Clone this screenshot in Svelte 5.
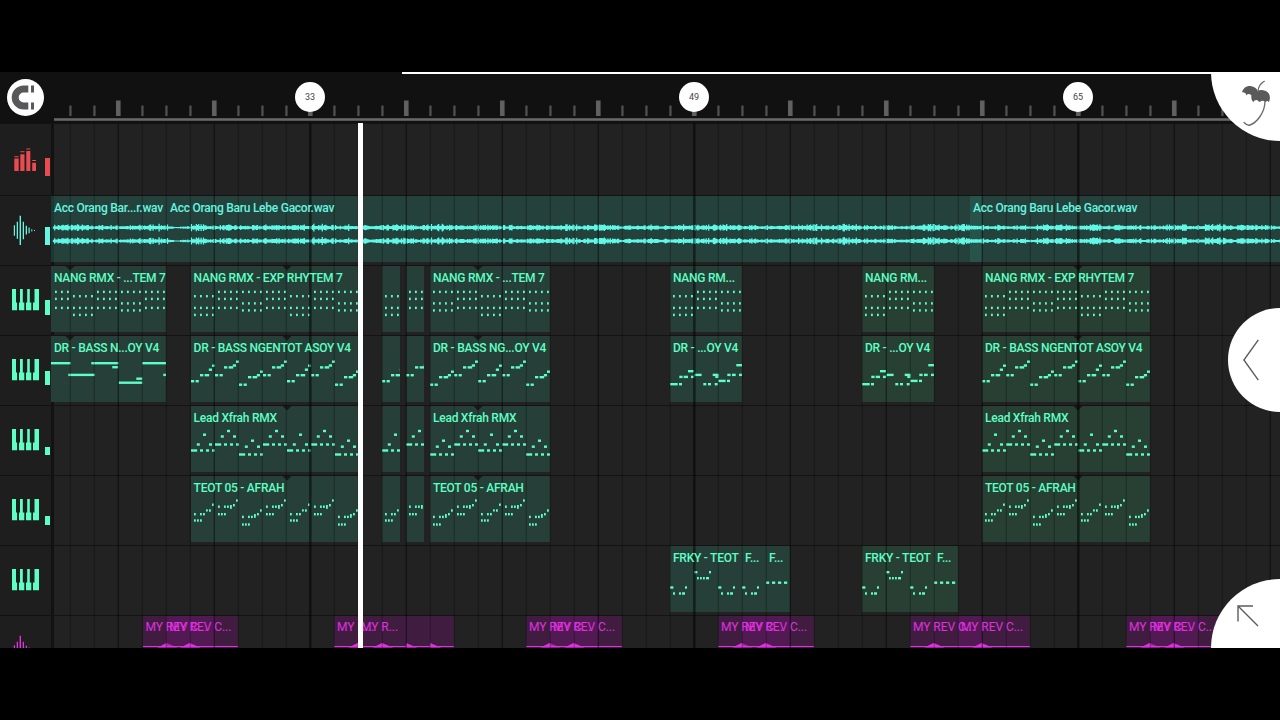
<script lang="ts">
    type Note = [number, number, number, number?];
    type Clip = {
        x : number;
        w : number;
        label? : string;
        notes? : Note[];
        phase? : number;
        once? : boolean;
        warm? : boolean;
        peak? : number;
    };
    type Track = { icon : string; color : string; meter : number; clips : Clip[] };

    // geometry of the timeline: one bar is 24px, lanes start right after the track header
    const BAR = 24;
    const LANE_X = 51;
    const LOOP = BAR * 4;
    const WIDTH = 1280 - LANE_X;

    const bars = Array.from({ length: 51 }, (_, i) => ({ x: 70 + i * BAR - LANE_X, n: i + 23 }));
    const markers = [33, 49, 65];

    function isBig(n : number) : boolean
    {
        return (n - 33) % 4 === 0;
    }

    function shift(notes : Note[], bar : number) : Note[]
    {
        return notes.map(([x, y, w, h]) => [x + bar * BAR, y, w, h] as Note);
    }

    function chord(ys : number[]) : Note[]
    {
        return ys.flatMap(y => [3, 9, 15, 21].map(x => [x, y, 1.8, 2.4] as Note));
    }

    function steps(ys : number[]) : Note[]
    {
        const [a, b, c, d] = ys;
        return [[0, a, 3.2], [4.6, a, 3.2], [9, b, 3.3], [13.6, b, 4.6], [17.8, c, 3.2], [21, d, 3]];
    }

    function lead(low : number, ys : number[]) : Note[]
    {
        return [[0, low, 6.2], [9, low, 3], [15, low, 3], [21, low, 3], [5.8, ys[0], 3], [12, ys[1], 3], [18, ys[2], 3]];
    }

    function plucks(low : number, mid : number, up : number, top : number, tall : number) : Note[]
    {
        return [
            [3, low, 1.8], [6, low, 1.8], [9, low, 1.8],
            [3, mid, 1.8], [9, mid, 1.8], [12, mid, 1.8],
            [15, up, 1.8, tall], [18, up - (tall > 3 ? 1 : 0), 1.8], [21, top, 1.8]
        ];
    }

    const rhythmB = chord([24.7, 31.7, 40.7]);
    const rhythm : Note[] = [
        ...chord([29, 40.7, 47.7]),
        ...shift(rhythmB, 1),
        ...shift(chord([24.7, 36.2, 43.2]), 2),
        ...shift(rhythmB, 3)
    ];

    const bassB = steps([38, 30.2, 28.3, 24.5]);
    const bass : Note[] = [
        ...steps([44, 38, 32.5, 28.5]),
        ...shift(bassB, 1),
        ...shift(steps([47.5, 40, 38, 34.5]), 2),
        ...shift(bassB, 3)
    ];
    const bassIntro : Note[] = [
        [0, 26, 19.7], [17.3, 37.7, 26.4], [40.3, 26, 27.4], [61.3, 30, 6],
        [67.7, 45.5, 23.6], [85.3, 41.5, 6], [91.3, 26, 24], [112.3, 37.7, 3]
    ];
    const bassFill : Note[] = [
        [0, 47, 7.7], [9, 47, 3], [9.3, 39.7, 3.3], [13.7, 39.7, 4.3], [18, 34, 6], [21, 39.7, 3.3],
        [24.3, 37.7, 7.3], [33.3, 47, 3], [38, 47, 3], [44.7, 47, 3], [42.7, 37.7, 6], [45.3, 39.7, 3.3],
        [48.3, 43.7, 7.3], [57, 43.7, 3], [57.3, 37.7, 3.3], [62, 37.7, 3.7], [66.3, 28, 5.7], [69, 37.7, 3]
    ];

    const leadB = lead(37.3, [29.3, 23.8, 29.3]);
    const leadNotes : Note[] = [
        ...lead(43.3, [37.3, 27.5, 37.3]),
        ...shift(leadB, 1),
        ...shift(lead(47.3, [39.5, 33.5, 39.5]), 2),
        ...shift(leadB, 3)
    ];

    const teotB = plucks(37, 29.5, 29, 23.3, 3.8);
    const teot : Note[] = [
        ...plucks(43.3, 37, 33.3, 27.5, 2.2),
        ...shift(teotB, 1),
        ...shift(plucks(47.3, 39.7, 38, 33.3, 3.8), 2),
        ...shift(teotB, 3)
    ];

    const dip : Note[] = [[0, 40.3, 3.4], [3, 46.3, 2], [9, 46.3, 2], [12, 46.3, 3], [15, 40.3, 2]];
    const bump : Note[] = [[0, 25, 3.4], [3, 31, 1.8], [6, 31, 1.8], [9, 31, 1.8], [12, 31, 3], [15, 25, 2]];
    const frky : Note[] = [...dip, ...shift(bump, 1), ...shift(dip, 2)];
    const frkyEnd : Note[] = [[0, 35.5, 3.2], [6, 35.5, 3.2], [12, 35.5, 3.2], [18, 35.5, 3.2]];

    // short cuts and the long repeats shared by the melodic tracks
    function arrangement(notes : Note[], name : string, short : string) : Clip[]
    {
        return [
            { x: 190.6, w: 167, label: name, notes },
            { x: 382, w: 18, notes },
            { x: 406, w: 18, notes, phase: 1 },
            { x: 430, w: 119.7, label: short, notes, phase: 2 },
            { x: 982, w: 167.7, label: name, notes, warm: true }
        ];
    }

    function riser(x : number, gap : number) : Clip[]
    {
        return [
            { x, w: 72, label: 'MY REV C...', peak: 23.5 },
            { x: x + gap, w: 72, label: 'MY REV C...', peak: 23.5 }
        ];
    }

    const tracks : Track[] = [
        { icon: 'levels', color: 'red', meter: 18, clips: [] },
        { icon: 'wave', color: 'cyan', meter: 18, clips: [
            { x: 51, w: 116, label: 'Acc Orang Bar...r.wav' },
            { x: 167, w: 815, label: 'Acc Orang Baru Lebe Gacor.wav' },
            { x: 970, w: 320, label: 'Acc Orang Baru Lebe Gacor.wav' }
        ] },
        { icon: 'keys', color: 'green', meter: 15, clips: [
            { x: 51, w: 115, label: 'NANG RMX - ...TEM 7', notes: rhythm, phase: 77 / BAR },
            ...arrangement(rhythm, 'NANG RMX - EXP RHYTEM 7', 'NANG RMX - ...TEM 7'),
            { x: 670, w: 71.7, label: 'NANG RM...', notes: rhythm },
            { x: 862, w: 71.7, label: 'NANG RM...', notes: rhythm, warm: true }
        ] },
        { icon: 'keys', color: 'green', meter: 14, clips: [
            { x: 51, w: 115, label: 'DR - BASS N...OY V4', notes: bassIntro, once: true },
            ...arrangement(bass, 'DR - BASS NGENTOT ASOY V4', 'DR - BASS NG...OY V4'),
            { x: 670, w: 71.7, label: 'DR - ...OY V4', notes: bassFill, once: true },
            { x: 862, w: 71.7, label: 'DR - ...OY V4', notes: bassFill, once: true, warm: true }
        ] },
        { icon: 'keys', color: 'green', meter: 8, clips: arrangement(leadNotes, 'Lead Xfrah RMX', 'Lead Xfrah RMX') },
        { icon: 'keys', color: 'green', meter: 9, clips: arrangement(teot, 'TEOT 05 - AFRAH', 'TEOT 05 - AFRAH') },
        { icon: 'keys', color: 'green', meter: 0, clips: [
            { x: 670, w: 72, label: 'FRKY - TEOT', notes: frky, once: true },
            { x: 742, w: 24, label: 'F...', notes: dip, once: true },
            { x: 766, w: 24, label: 'F...', notes: frkyEnd, once: true },
            { x: 862, w: 72, label: 'FRKY - TEOT', notes: frky, once: true, warm: true },
            { x: 934, w: 24, label: 'F...', notes: frkyEnd, once: true, warm: true }
        ] },
        { icon: 'wave', color: 'purple', meter: 0, clips: [
            ...riser(142.5, 23.7),
            { x: 334, w: 24, label: 'MY R...', peak: 23.5 },
            { x: 358, w: 48, label: 'MY R...', peak: 24 },
            { x: 406, w: 24, peak: 0 },
            { x: 430, w: 24, peak: 0 },
            ...riser(526, 24),
            ...riser(718, 24),
            ...riser(910, 48),
            ...riser(1126, 24)
        ] }
    ];

    function visibleNotes(clip : Clip) : Note[]
    {
        if(!clip.notes)
        {
            return [];
        }
        if(clip.once)
        {
            return clip.notes;
        }
        const offset = (clip.phase ?? 0) * BAR;
        const out : Note[] = [];
        for(let loop = 0; loop < 4; loop++)
        {
            for(const [x, y, w, h] of clip.notes)
            {
                const left = x + loop * LOOP - offset;
                if(left + w > 0 && left < clip.w)
                {
                    out.push([left, y, w, h]);
                }
            }
        }
        return out;
    }

    // where the pattern starts over inside a clip
    function loopPoint(clip : Clip) : number
    {
        return LOOP - (clip.phase ?? 0) * BAR;
    }

    function hasLoopPoint(clip : Clip) : boolean
    {
        if(clip.label?.startsWith('DR - BASS N...'))
        {
            return true;
        }
        return !!clip.notes && !clip.once && loopPoint(clip) < clip.w;
    }

    function waveform(mid : number) : string
    {
        let seed = 7;
        let path = '';
        for(let x = 2.5; x < WIDTH; x += 1.2)
        {
            seed = (seed * 16807) % 2147483647;
            const r = seed / 2147483647;
            const envelope = 1.05 + 0.6 * Math.abs(Math.sin(x / 13) * Math.cos(x / 41));
            const quiet = x > 117 && x < 140 ? 0.45 : 1;
            const a = (1 + r * r * 1.5) * envelope * quiet;
            path += `M${x.toFixed(1)} ${(mid - a).toFixed(1)}V${(mid + a).toFixed(1)}`;
        }
        return path;
    }

    const wave = waveform(31.6) + waveform(45);
</script>

<div class="screen">
    <main>
        <header>
            <div class="corner">
                <button class="snap" aria-label="Snap">
                    <svg viewBox="0 0 37 37" width="37" height="37">
                        <path d="M21.3 10H16.7a8.5 8.5 0 0 0 0 17H21.3" fill="none" stroke="#58585a" stroke-width="7" />
                        <path d="M24 6.5h3v7h-3zM24 23.5h3v7h-3z" fill="#58585a" />
                    </svg>
                </button>
            </div>
            <div class="ruler">
                <svg width={WIDTH} height="51">
                    {#each bars as bar}
                        {#if isBig(bar.n)}
                            <rect x={bar.x - 2} y="28.5" width="4.6" height="15.5" fill="#606060" />
                        {:else}
                            <rect x={bar.x - .7} y="33.5" width="2.3" height="10.5" fill="#505050" />
                        {/if}
                    {/each}
                    <rect x="3" y="46.2" width={WIDTH} height="2.6" fill="#686868" />
                </svg>
                <div class="overview"></div>
                {#each markers as marker}
                    <span class="marker" style="left: {310 + (marker - 33) * BAR - LANE_X - 15}px">{marker}</span>
                {/each}
            </div>
        </header>

        <div class="tracks">
            {#each tracks as track}
                <div class="track {track.color}">
                    <div class="head">
                        <svg width="30" height="30" viewBox="0 0 30 30" fill="currentColor">
                            {#if track.icon === 'levels'}
                                <path d="M2.3 12.5h4.4V25H2.3zM8.3 8.3h4.2V25H8.3zM14.3 5h4V25h-4zM20.2 16.7H24V25h-3.8z" />
                                <path d="M2.3 10.2h4.4v1H2.3zM8.3 5.3h4.2v1H8.3zM14.3 2.6h4v1h-4zM20.2 14h3.8v1h-3.8z" />
                            {:else if track.icon === 'wave'}
                                <path d="M1.8 10.3h1.2v10.4H1.8zM4.7 6.7h1.3v17H4.7zM7.6 .7h1.4v29.3H7.6zM10.7 6.7h1.3v17.5h-1.3zM13.7 10.7h1.3v8.8h-1.3zM16.5 12.5h1.2v5.8h-1.2zM19.3 14.3h1v2.2h-1zM22 14.9h1v1h-1z" />
                            {:else}
                                <path d="M0 4H4V17.4H5.1V25.3H0zM8 4H10.8V17.4H12.3V25.3H7V17.4H8zM15.2 4H17.8V17.4H19.3V25.3H14V17.4H15.2zM22.5 4H27V25.3H21V17.4H22.5z" />
                            {/if}
                        </svg>
                        <div class="meter" style="height: {track.meter}px"></div>
                    </div>
                    <div class="lane">
                        {#each track.clips as clip}
                            <div class="clip" class:warm={clip.warm} style="left: {clip.x - LANE_X}px; width: {clip.w}px">
                                {#if clip.label}
                                    <span class="label">{clip.label}</span>
                                {/if}
                                <svg width={clip.w} height="66" fill="currentColor">
                                    {#each visibleNotes(clip) as [x, y, w, h]}
                                        <rect {x} {y} width={w} height={h ?? 2.4} />
                                    {/each}
                                    {#if hasLoopPoint(clip)}
                                        <path d="M{clip.x < 60 ? 14.5 : loopPoint(clip) - 4.5} 0h9l-4.5 4.5z" fill="#161c1a" />
                                    {/if}
                                    {#if clip.peak !== undefined}
                                        <rect x="0" y="30" width={clip.w} height="1" />
                                        <path d="M{clip.peak === 0 ? 0 : clip.peak - 9} 31.5L{clip.peak} 27L{clip.peak + 11} 31.5z" />
                                    {/if}
                                </svg>
                            </div>
                        {/each}
                        {#if track.color === 'cyan'}
                            <svg class="wave" width={WIDTH} height="66">
                                <path d={wave} stroke="#5ff7e6" stroke-width="1.3" />
                            </svg>
                        {/if}
                    </div>
                </div>
            {/each}
            <svg class="grid" width={WIDTH} height="525">
                {#each bars as bar}
                    {#if markers.includes(bar.n)}
                        <rect x={bar.x - 1} y="0" width="2.6" height="525" fill="#000" opacity=".5" />
                    {:else}
                        <rect x={bar.x - .3} y="0" width="1.2" height="525" fill="#000" opacity={isBig(bar.n) ? 0.5 : 0.25} />
                    {/if}
                {/each}
            </svg>
            <div class="playhead"></div>
        </div>

        <button class="round top" aria-label="Menu">
            <svg width="30" height="46" viewBox="303 30 90 138">
                <path d="M306 67C310 53 320 47 332 48C343 50 350 55 353 62C364 58 378 61 386 70C391 78 391 90 386 97C384 92 381 91 377 96C370 91 364 92 359 96C355 94 353 91 350 90C345 90 341 92 340 97C335 92 333 84 334 76C329 71 323 71 319 76C318 70 313 66 306 67Z" fill="#5a5a5a" />
                <path d="M374 33Q354 44 354 66M375 93C375 128 350 158 330 165C322 168 316 162 311 157" fill="none" stroke="#6a6a6a" stroke-width="4" />
            </svg>
        </button>
        <button class="round middle" aria-label="Open panel">
            <svg width="16" height="42" viewBox="0 0 16 42" fill="none" stroke="#5c5c5c" stroke-width="1.4">
                <path d="M15.3 .8L.9 21L15.3 41.2" />
            </svg>
        </button>
        <button class="round bottom" aria-label="Resize">
            <svg width="22" height="22" viewBox="0 0 22 22" fill="none" stroke="#5c5c5c" stroke-width="1.4">
                <path d="M1 16.5V1H16M1 1L21 21" />
            </svg>
        </button>
    </main>
</div>

<style>
    :global(body)
    {
        background: #000;
    }

    .screen
    {
        height: 720px;
        width: 1280px;
        padding: 72px 0;
        box-sizing: border-box;
        background: #000;
        font-family: Roboto, sans-serif;
    }

    main
    {
        position: relative;
        display: flex;
        flex-direction: column;
        height: 576px;
        overflow: hidden;
        background: #222;
    }

    header
    {
        display: flex;
        flex: 0 0 51px;
        background: #111;
    }

    button
    {
        border: none;
        padding: 0;
        background: #fff;
    }

    svg
    {
        display: block;
    }

    .corner
    {
        width: 51px;
        padding: 6.5px 0 0 7px;
        box-sizing: border-box;
    }

    .snap
    {
        width: 37px;
        height: 37px;
        border-radius: 50%;
    }

    .ruler
    {
        position: relative;
        flex: 1;
    }

    .overview
    {
        position: absolute;
        top: 0;
        left: 351px;
        right: 0;
        height: 2.4px;
        background: #fff;
    }

    .marker
    {
        position: absolute;
        top: 10px;
        width: 30px;
        height: 30px;
        border-radius: 50%;
        background: #fff;
        color: #444;
        font-size: 9px;
        line-height: 30px;
        text-align: center;
    }

    .tracks
    {
        position: relative;
        flex: 1;
        overflow: hidden;
    }

    .track
    {
        display: flex;
        height: 70px;
    }

    .track:first-child
    {
        height: 72px;
    }

    .red { color: #e94b50; --clip: #532; }
    .cyan { color: #66f5e0; --clip: rgba(44, 110, 98, .42); }
    .green { color: #5effc4; --clip: #263f38; }
    .purple { color: #e22fe2; --clip: rgba(112, 20, 112, .38); }

    .head
    {
        display: flex;
        align-items: flex-end;
        justify-content: space-between;
        width: 51px;
        padding: 0 1.5px 20px 12px;
        box-sizing: border-box;
        background: #1e1e1e;
        border-top: 1px solid #111;
    }

    .red .head
    {
        padding-bottom: 19px;
    }

    .meter
    {
        width: 5px;
        background: currentColor;
    }

    .lane
    {
        position: relative;
        flex: 1;
        border-top: 1px solid #131313;
        background: linear-gradient(to right, #121212 2.5px, #222 2.5px);
    }

    .clip
    {
        position: absolute;
        top: 0;
        height: 66px;
        background: var(--clip);
    }

    .green .clip.warm
    {
        background: #274033;
    }

    .clip svg
    {
        position: absolute;
        top: 0;
        left: 0;
    }

    /* keeps the names readable where bar lines run through a clip */
    .label
    {
        position: relative;
        z-index: 1;
        display: block;
        padding: 3.6px 0 0 3px;
        font-size: 12px;
        font-weight: 500;
        letter-spacing: -.25px;
        line-height: 16px;
        white-space: nowrap;
    }

    .purple .label
    {
        padding-top: 3px;
        font-weight: 400;
        letter-spacing: -.05px;
    }

    .wave
    {
        position: absolute;
        top: 0;
        left: 0;
    }

    .grid
    {
        position: absolute;
        top: 0;
        left: 51px;
    }

    .playhead
    {
        position: absolute;
        z-index: 2;
        top: 0;
        bottom: 0;
        left: 357.7px;
        width: 5px;
        background: #fff;
    }

    .round
    {
        position: absolute;
        z-index: 3;
        border-radius: 50%;
    }

    .top, .bottom
    {
        right: -69px;
        width: 138px;
        height: 138px;
    }

    .top { top: -69px; }
    .bottom { bottom: -69px; }

    .middle
    {
        top: 235.5px;
        right: -52px;
        width: 104px;
        height: 104px;
    }

    .round svg
    {
        position: absolute;
    }

    .top svg
    {
        left: 30px;
        top: 77px;
    }

    .middle svg
    {
        left: 15px;
        top: 31px;
    }

    .bottom svg
    {
        left: 26px;
        top: 26px;
    }
</style>
